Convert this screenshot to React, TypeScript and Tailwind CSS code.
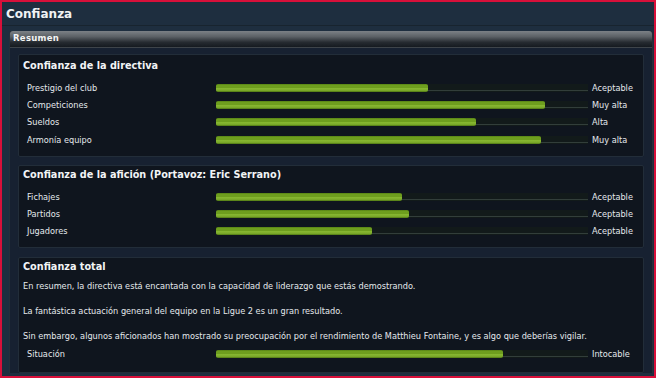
import React from "react";

type Row = { label: string; pct: number; value: string };

const directiva: Row[] = [
  { label: "Prestigio del club", pct: 212 / 372, value: "Aceptable" },
  { label: "Competiciones", pct: 329 / 372, value: "Muy alta" },
  { label: "Sueldos", pct: 260 / 372, value: "Alta" },
  { label: "Armonía equipo", pct: 325 / 372, value: "Muy alta" },
];

const aficion: Row[] = [
  { label: "Fichajes", pct: 186 / 372, value: "Aceptable" },
  { label: "Partidos", pct: 193 / 372, value: "Aceptable" },
  { label: "Jugadores", pct: 156 / 372, value: "Aceptable" },
];

function Bar({ pct }: { pct: number }) {
  return (
    <div className="relative h-[8px] w-[372px] bg-[#121a1a]">
      <div className="absolute left-0 right-0 bottom-[1px] h-[1px] bg-[#323e3a]" />
      <div
        className="absolute left-0 top-0 h-[8px] rounded-[2px] bg-[linear-gradient(to_bottom,#527e14_0%,#6e9e1e_15%,#6e9e1e_45%,#86b630_55%,#7cab2a_80%,#4c7412_100%)]"
        style={{ width: `${pct * 100}%` }}
      />
    </div>
  );
}

function BarRow({ r }: { r: Row }) {
  return (
    <div className="flex h-[17.4px] items-center pl-[8px]">
      <div className="w-[189px] text-[8.2px] text-[#e4e8ec]">{r.label}</div>
      <Bar pct={r.pct} />
      <div className="pl-[4px] text-[8.2px] text-[#e4e8ec]">{r.value}</div>
    </div>
  );
}

function Card({ title, children, className }: { title: string; children: React.ReactNode; className: string }) {
  return (
    <div className={`rounded-[2px] border border-[#222d39] bg-[#0f151e] ${className}`}>
      <div className="h-[14px] pl-[4px] text-[9.7px] font-bold leading-[14px] text-[#f2f4f6]">
        {title}
      </div>
      {children}
    </div>
  );
}

export default function App() {
  return (
    <div
      className="h-[378px] w-[656px] overflow-hidden border-2 border-[#d8103a] bg-[#1e2e3f] text-white"
      style={{ fontFamily: '"DejaVu Sans", Verdana, sans-serif' }}
    >
      <div className="h-[24px] border-b border-[#18242f] pl-[4px] text-[12px] font-bold leading-[24px] text-[#f0f2f4]">
        Confianza
      </div>
      <div className="ml-[7px] mr-[1px] mt-[5px] flex h-[342px] flex-col rounded-t-[3px] border-x border-[#26303a] bg-[#121923]">
        <div className="h-[16px] rounded-t-[3px] bg-[linear-gradient(to_bottom,#7c8186_0%,#5c6166_35%,#262b31_70%,#151a20_100%)] pl-[3px] text-[8.5px] font-bold leading-[15px] tracking-[0.3px] text-[#f4f4f4]">
          Resumen
        </div>
        <div className="h-[1px] bg-[#3e444a]" />
        <div className="flex flex-1 flex-col bg-[#172131] px-[8px] pt-[6px]">
          <Card title="Confianza de la directiva" className="h-[103px] pt-[4px]">
            <div className="mt-[6px]">
              {directiva.map((r) => (
                <BarRow key={r.label} r={r} />
              ))}
            </div>
          </Card>
          <Card title="Confianza de la afición (Portavoz: Eric Serrano)" className="mt-[8px] h-[83px] pt-[2px]">
            <div className="mt-[6px]">
              {aficion.map((r) => (
                <BarRow key={r.label} r={r} />
              ))}
            </div>
          </Card>
          <Card title="Confianza total" className="mt-[9px] h-[116px] pt-[2px]">
            <div className="mt-[6px] flex flex-col gap-[13px] pl-[4px] text-[8.2px] leading-[12px] text-[#e4e8ec]">
              <p>En resumen, la directiva está encantada con la capacidad de liderazgo que estás demostrando.</p>
              <p>La fantástica actuación general del equipo en la Ligue 2 es un gran resultado.</p>
              <p>
                Sin embargo, algunos aficionados han mostrado su preocupación por el rendimiento de Matthieu Fontaine, y es algo que deberías vigilar.
              </p>
            </div>
            <div className="mt-[3px]">
              <BarRow r={{ label: "Situación", pct: 287 / 372, value: "Intocable" }} />
            </div>
          </Card>
        </div>
      </div>
    </div>
  );
}
